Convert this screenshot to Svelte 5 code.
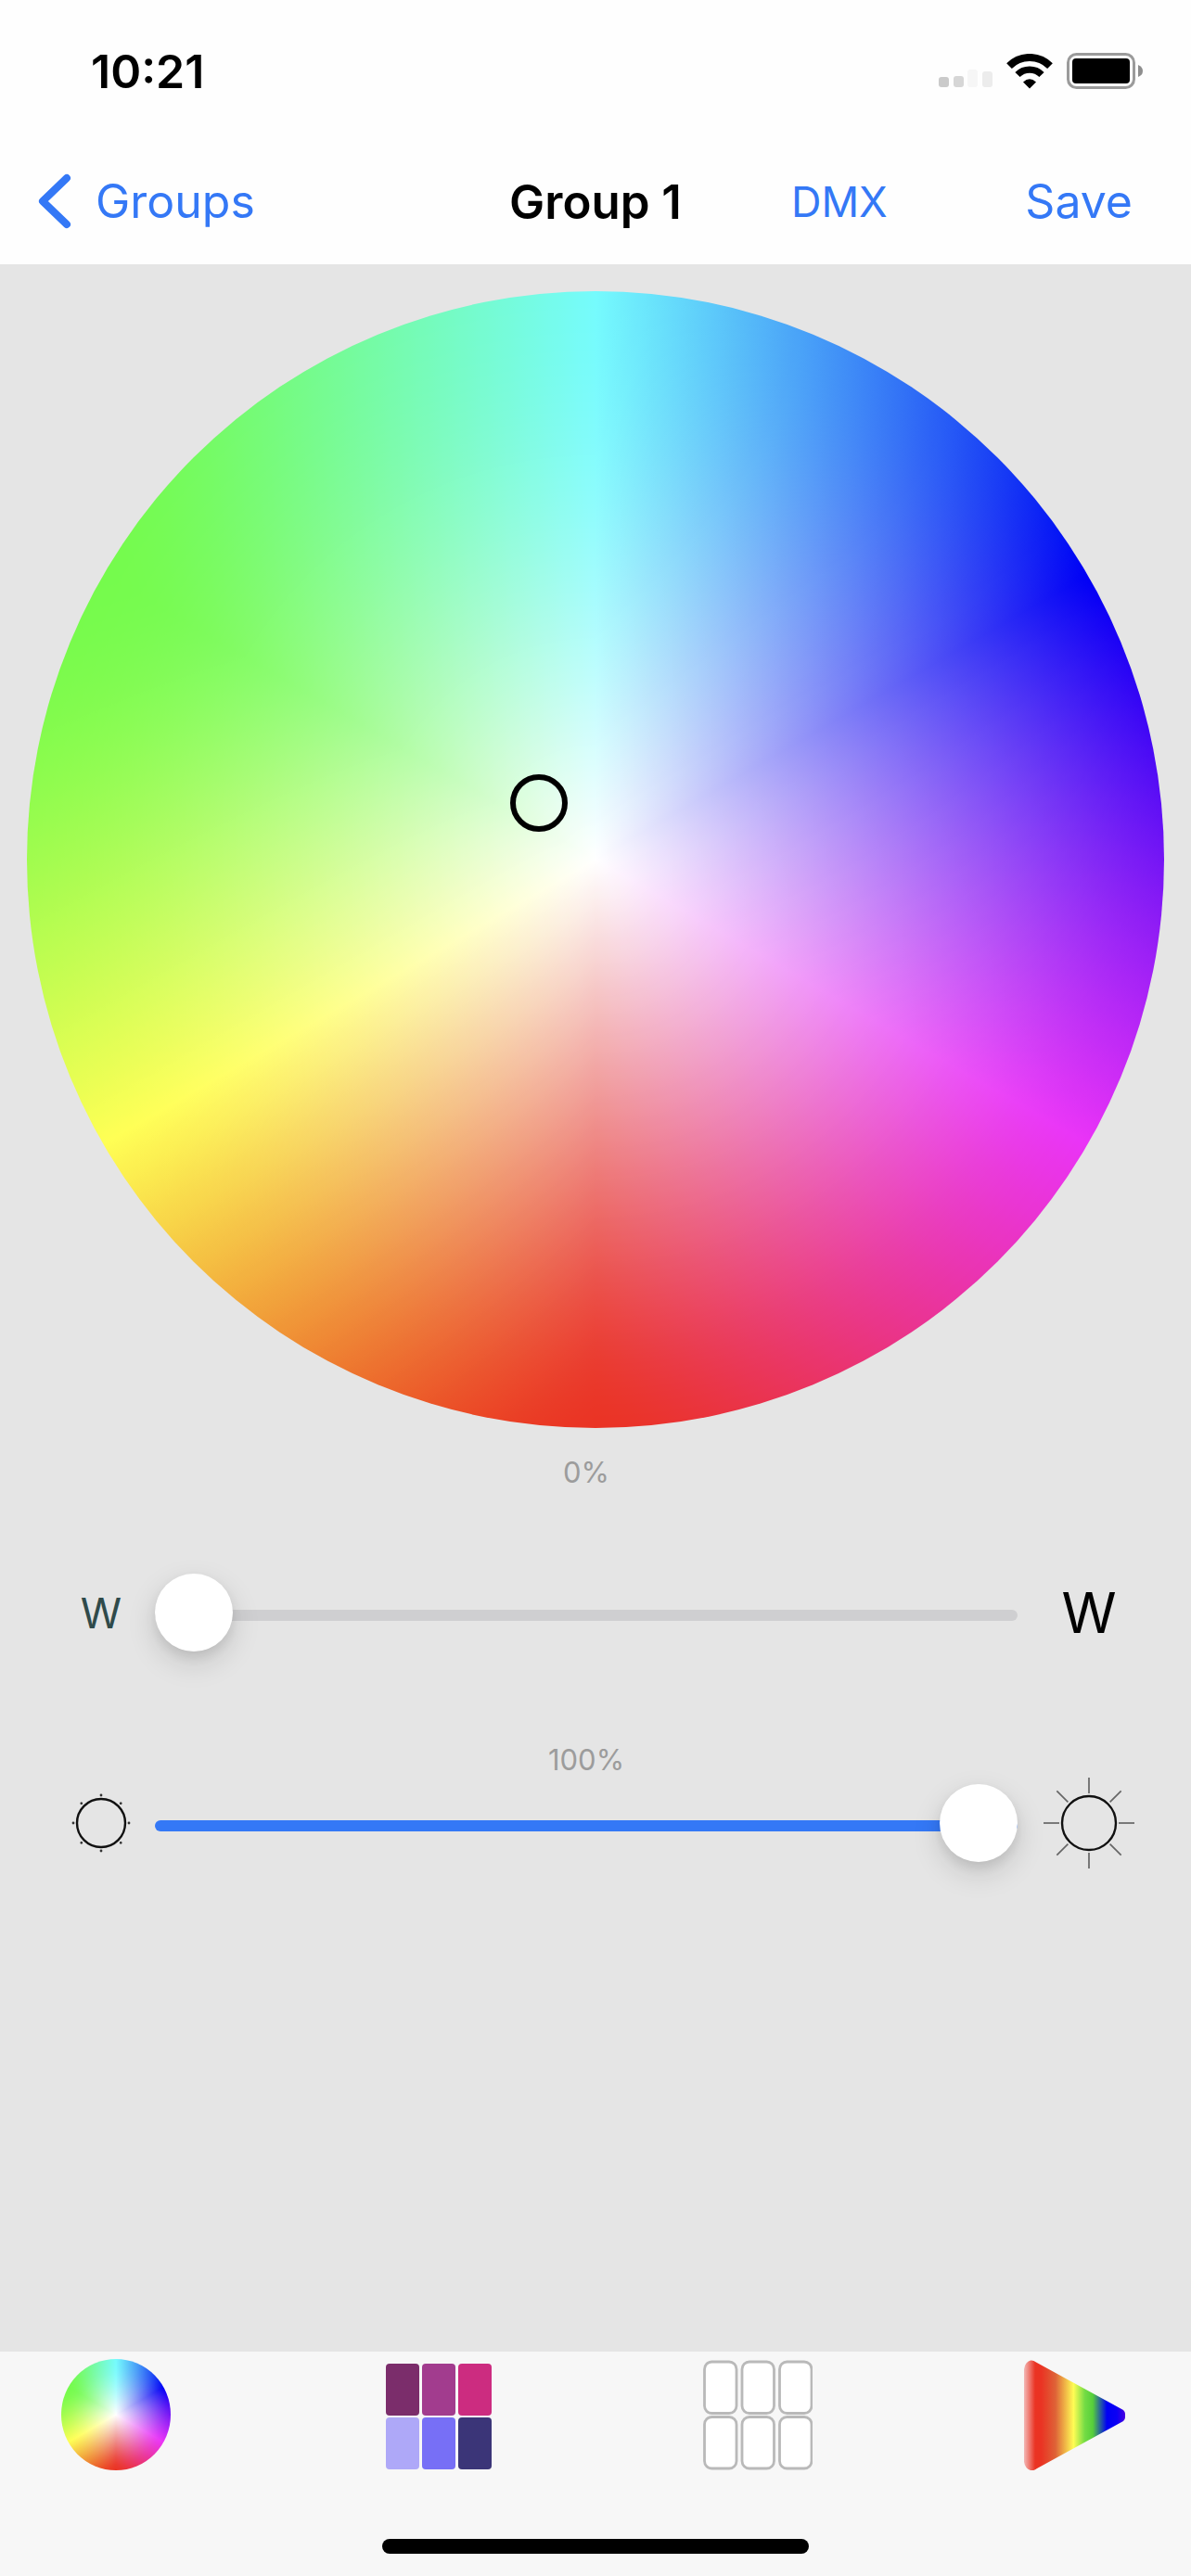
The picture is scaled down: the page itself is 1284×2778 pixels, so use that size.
<script>
  let white = $state(0);
  let brightness = $state(100);
  let picker = $state({ x: 45, y: 45 });
  let activeTab = $state('wheel');

  const signalBars = [
    { x: 0, y: 12, height: 11, color: '#cacaca' },
    { x: 16, y: 11, height: 12, color: '#d6d6d6' },
    { x: 31, y: 4, height: 19, color: '#f6f6f6' },
    { x: 47, y: 6, height: 17, color: '#ececec' }
  ];

  const swatches = ['#7b2d6b', '#a23c8e', '#cc2c80', '#aea8f8', '#776ff6', '#3b3578'];
  const rays = [0, 45, 90, 135, 180, 225, 270, 315];

  function pickColor(event) {
    const box = event.currentTarget.getBoundingClientRect();
    picker = {
      x: ((event.clientX - box.left) / box.width) * 100,
      y: ((event.clientY - box.top) / box.height) * 100
    };
  }
</script>

<!-- sRGB to Display P3, used by the color wheels -->
<svg width="0" height="0" aria-hidden="true">
  <filter id="display-p3" x="0" y="0" width="1" height="1" color-interpolation-filters="linearRGB">
    <feColorMatrix
      type="matrix"
      values="0.8225 0.1775 0 0 0
              0.0332 0.9668 0 0 0
              0.0171 0.0724 0.9105 0 0
              0 0 0 1 0"
    />
  </filter>
</svg>

<div class="screen">
  <header>
    <div class="status-bar">
      <span class="time">10:21</span>
      <div class="status-icons">
        <svg width="58" height="39" viewBox="0 -14 58 39" aria-hidden="true">
          {#each signalBars as bar}
            <rect x={bar.x} y={bar.y} width="11" height={bar.height} rx="3" fill={bar.color} />
          {/each}
        </svg>
        <svg width="50" height="38" viewBox="0 0 50 38" aria-hidden="true">
          <path d="M3 13.1A31 31 0 0 1 47 13.1" fill="none" stroke="#000" stroke-width="8" />
          <path d="M12 22.5A18.4 18.4 0 0 1 38 22.5" fill="none" stroke="#000" stroke-width="7.4" />
          <path d="M25 37.5L18 30.6Q25 24 32 30.6Z" fill="#000" />
        </svg>
        <svg width="84" height="39" viewBox="0 0 84 39" aria-hidden="true">
          <rect x="1.5" y="1.5" width="71" height="36" rx="9" fill="none" stroke="#9b9b9b" stroke-width="3" />
          <rect x="6" y="6" width="62" height="27" rx="4" fill="#000" />
          <path d="M77 13Q82 15 82 19.5Q82 24 77 26Z" fill="#8e8e8e" />
        </svg>
      </div>
    </div>

    <nav class="nav-bar">
      <a class="back" href="#groups">
        <svg width="36" height="60" viewBox="0 0 36 60" aria-hidden="true">
          <path d="M31 5L5 30L31 55" fill="none" stroke="#3478f6" stroke-width="8" stroke-linecap="round" stroke-linejoin="round" />
        </svg>
        Groups
      </a>
      <h1>Group 1</h1>
      <div class="actions">
        <button class="dmx">DMX</button>
        <button>Save</button>
      </div>
    </nav>
  </header>

  <main>
    <button class="wheel hues" aria-label="Color wheel" onclick={pickColor}>
      <span class="picker" style="left: {picker.x}%; top: {picker.y}%"></span>
    </button>

    <section class="slider-group white-group">
      <label for="white">{white}%</label>
      <span class="low">W</span>
      <input id="white" type="range" min="0" max="100" bind:value={white} style="--fill: {white}%" />
      <span class="high">W</span>
    </section>

    <section class="slider-group">
      <label for="brightness">{brightness}%</label>
      <span class="low">
        <svg width="66" height="66" viewBox="-33 -33 66 66" aria-hidden="true">
          <circle r="26" fill="none" stroke="#111" stroke-width="2.4" />
          {#each rays as angle}
            <circle cx="30" r="1.4" fill="#333" transform="rotate({angle})" />
          {/each}
        </svg>
      </span>
      <input id="brightness" type="range" min="0" max="100" bind:value={brightness} style="--fill: {brightness}%" />
      <span class="high">
        <svg width="100" height="100" viewBox="-50 -50 100 100" aria-hidden="true">
          <circle r="29" fill="none" stroke="#111" stroke-width="2.4" />
          {#each rays as angle}
            <path d="M32 0H49" stroke="#666" stroke-width="1.7" transform="rotate({angle})" />
          {/each}
        </svg>
      </span>
    </section>
  </main>

  <footer>
    <nav class="tab-bar">
      <button aria-label="Wheel" aria-pressed={activeTab === 'wheel'} onclick={() => (activeTab = 'wheel')}>
        <span class="mini-wheel hues"></span>
      </button>
      <button aria-label="Palette" aria-pressed={activeTab === 'palette'} onclick={() => (activeTab = 'palette')}>
        <svg width="118" height="120" viewBox="0 0 118 120" aria-hidden="true">
          {#each swatches as color, i}
            <rect x={4 + (i % 3) * 39} y={5 + Math.floor(i / 3) * 58} width="36" height="56" rx="4" fill={color} />
          {/each}
        </svg>
      </button>
      <button aria-label="Presets" aria-pressed={activeTab === 'presets'} onclick={() => (activeTab = 'presets')}>
        <svg width="118" height="120" viewBox="0 0 118 120" aria-hidden="true">
          {#each swatches as _, i}
            <rect x={1.5 + (i % 3) * 40.5} y={3 + Math.floor(i / 3) * 59.5} width="34.5" height="55.5" rx="8" fill="#fff" stroke="#b9b9b9" stroke-width="2.8" />
          {/each}
        </svg>
      </button>
      <button aria-label="Effects" aria-pressed={activeTab === 'effects'} onclick={() => (activeTab = 'effects')}>
        <svg width="118" height="120" viewBox="0 0 118 120" aria-hidden="true">
          <defs>
            <linearGradient id="rainbow" gradientUnits="userSpaceOnUse" x1="0" y1="0" x2="109" y2="0">
              <stop offset="0" stop-color="#f3b8b6" />
              <stop offset="0.11" stop-color="#ea3323" />
              <stop offset="0.17" stop-color="#ea3323" />
              <stop offset="0.31" stop-color="#de6237" />
              <stop offset="0.49" stop-color="#fffd54" />
              <stop offset="0.6" stop-color="#74dc45" />
              <stop offset="0.68" stop-color="#56cf3a" />
              <stop offset="0.82" stop-color="#0000f5" />
              <stop offset="0.92" stop-color="#0c00f5" />
              <stop offset="1" stop-color="#4a00e0" />
            </linearGradient>
          </defs>
          <path d="M0 11Q1 3 7 1.5Q10 1 13 3.5L107 55Q109 57 109 59V63Q109 65 107 67L14 118Q10 121 7 120Q1 118 0 111Z" fill="url(#rainbow)" />
        </svg>
      </button>
    </nav>
    <div class="home-indicator"></div>
  </footer>
</div>

<style>
  :global(body) {
    margin: 0;
  }

  .screen {
    display: flex;
    flex-direction: column;
    min-height: 100vh;
    font-family: Inter, 'Liberation Sans', sans-serif;
    background-color: #e5e5e5;
    color: #000;
  }

  button {
    padding: 0;
    border: none;
    background: none;
    font: inherit;
    color: inherit;
    cursor: pointer;
  }

  svg {
    display: block;
  }

  header {
    background-color: #fefefe;
  }

  .status-bar {
    display: flex;
    align-items: center;
    justify-content: space-between;
    height: 153px;
    padding: 0 50px 0 98px;
  }

  .time {
    font-size: 50px;
    font-weight: 600;
  }

  .status-icons {
    display: flex;
    align-items: center;
    gap: 15px;
  }

  .nav-bar {
    display: grid;
    grid-template-columns: 1fr auto 1fr;
    align-items: center;
    box-sizing: border-box;
    height: 132px;
    padding-bottom: 4px;
    font-size: 50px;
    color: #3478f6;
  }

  .back {
    display: flex;
    align-items: center;
    gap: 26px;
    padding-left: 41px;
    color: inherit;
    text-decoration: none;
  }

  h1 {
    margin: 0;
    font-size: 51px;
    font-weight: 600;
    color: #000;
  }

  .actions {
    display: flex;
    align-items: center;
    justify-content: space-between;
    padding: 0 63px 0 118px;
  }

  .dmx {
    font-size: 45px;
  }

  main {
    flex: 1;
    padding-top: 29px;
  }

  .hues {
    border-radius: 50%;
    background:
      radial-gradient(closest-side, #fff, rgba(255, 255, 255, 0)),
      conic-gradient(#0ff, #00f 60deg, #f0f 120deg, #f00 180deg, #ff0 240deg, #0f0 300deg, #0ff);
    filter: url(#display-p3);
  }

  .wheel {
    display: block;
    position: relative;
    width: calc(100% - 58px);
    aspect-ratio: 1;
    margin: 0 auto 28px;
  }

  .picker {
    position: absolute;
    box-sizing: border-box;
    width: 62px;
    height: 62px;
    border: 6px solid #000;
    border-radius: 50%;
    transform: translate(-50%, -50%);
  }

  .slider-group {
    display: grid;
    grid-template-columns: 116px 1fr 154px;
    align-items: center;
    row-gap: 6px;
    padding: 0 33px 0 51px;
  }

  .white-group {
    row-gap: 89px;
    margin-bottom: 97px;
  }

  label {
    grid-column: 2;
    font-size: 31px;
    line-height: 40px;
    text-align: center;
    color: #9c9c9c;
  }

  .low,
  .high {
    display: flex;
    align-items: center;
    justify-content: center;
    height: 84px;
  }

  .low {
    grid-column: 1;
    font-size: 45px;
    color: #2f4a4a;
  }

  .high {
    font-size: 60px;
  }

  input[type='range'] {
    appearance: none;
    box-sizing: border-box;
    width: 100%;
    height: 84px;
    margin: 0;
    padding-top: 6px;
    background: transparent;
  }

  input[type='range']::-webkit-slider-runnable-track {
    height: 12px;
    border-radius: 6px;
    background: linear-gradient(to right, #3478f6 var(--fill), #cfcfd1 var(--fill));
  }

  input[type='range']::-webkit-slider-thumb {
    appearance: none;
    width: 84px;
    height: 84px;
    margin-top: -39px;
    border-radius: 50%;
    background: #fff;
    box-shadow: 0 12px 32px rgba(0, 0, 0, 0.14), 0 6px 12px rgba(0, 0, 0, 0.08);
  }

  footer {
    background-color: #f7f7f7;
  }

  .tab-bar {
    display: flex;
    justify-content: space-between;
    padding: 8px 62px 0 66px;
  }

  .mini-wheel {
    display: block;
    width: 118px;
    height: 120px;
  }

  .home-indicator {
    width: 460px;
    height: 16px;
    margin: 74px auto 24px;
    border-radius: 8px;
    background-color: #000;
  }
</style>
